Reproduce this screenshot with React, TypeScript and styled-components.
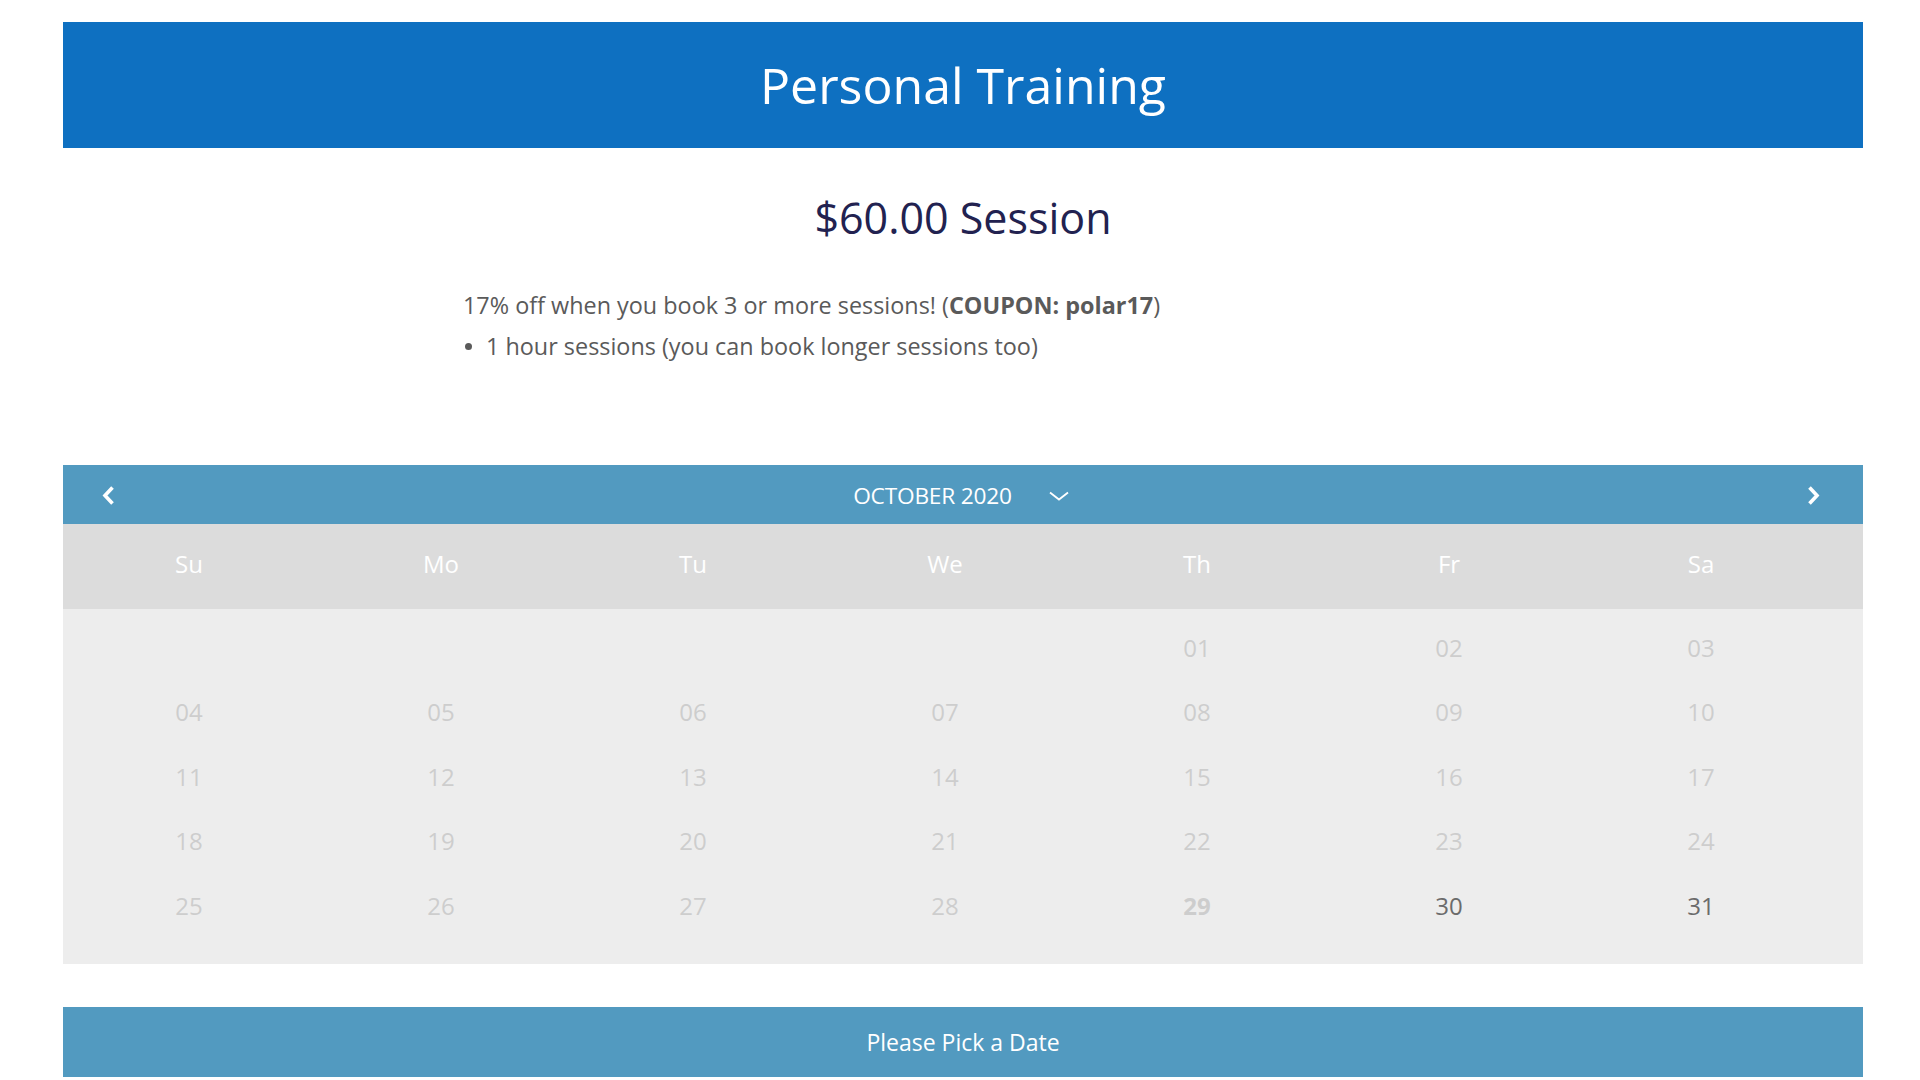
import React from "react";
import styled, { createGlobalStyle } from "styled-components";

const GlobalStyle = createGlobalStyle`
  html, body {
    margin: 0;
    padding: 0;
    background: #ffffff;
    font-family: "Open Sans", "Liberation Sans", sans-serif;
  }
`;

const Page = styled.div`
  width: 1800px;
  padding: 22px 0 0 63px;
`;

const Banner = styled.header`
  height: 126px;
  background-color: #0e70c1;
  display: flex;
  align-items: center;
  justify-content: center;
`;

const Title = styled.h1`
  margin: 0;
  color: #ffffff;
  font-size: 50px;
  font-weight: 400;
  line-height: 1.2;
`;

const Price = styled.h2`
  margin: 44px 0 0;
  text-align: center;
  color: #222250;
  font-size: 43px;
  font-weight: 400;
  line-height: 52px;
`;

const Description = styled.div`
  width: 1000px;
  margin: 41px auto 0;
  color: #5a5a5a;
  font-size: 23.4px;
  line-height: 41px;
`;

const Para = styled.p`
  margin: 0;
`;

const List = styled.ul`
  margin: 0;
  padding: 0;
  list-style: none;
`;

const Item = styled.li`
  display: flex;
  align-items: center;
  gap: 14px;
`;

const Dot = styled.span`
  width: 7px;
  height: 7px;
  margin-left: 2px;
  border-radius: 50%;
  background: #5a5a5a;
`;

const Calendar = styled.section`
  margin-top: 98px;
`;

const NavBar = styled.div`
  height: 59px;
  background-color: #529ac0;
  display: flex;
  align-items: center;
  justify-content: space-between;
  padding: 2px 43px 0 39px;
  box-sizing: border-box;
  color: #ffffff;
`;

const Arrow = styled.button`
  border: 0;
  background: none;
  padding: 0;
  width: 13px;
  height: 19px;
  display: flex;
  cursor: pointer;
`;

const MonthPicker = styled.div`
  display: flex;
  align-items: center;
  gap: 37px;
  font-size: 22.7px;
  letter-spacing: -0.2px;
`;

const Grid = styled.div<{ $pad?: string }>`
  display: grid;
  grid-template-columns: repeat(7, 252px);
  padding: ${(p) => p.$pad || "0"};
`;

const WeekRow = styled(Grid)`
  height: 85px;
  box-sizing: border-box;
  align-items: center;
  background-color: #dcdcdc;
`;

const DayName = styled.div`
  text-align: center;
  color: #ffffff;
  font-size: 24px;
`;

const DateArea = styled(Grid)`
  background-color: #ededed;
  grid-auto-rows: 64.5px;
  align-items: center;
`;

const DateCell = styled.div<{ $active?: boolean; $today?: boolean }>`
  text-align: center;
  font-size: 24px;
  color: ${(p) => (p.$active ? "#6b6b6b" : "#cdcdcd")};
  font-weight: ${(p) => (p.$today ? 700 : 400)};
`;

const PickButton = styled.button`
  display: block;
  width: 100%;
  height: 70px;
  margin-top: 43px;
  border: 0;
  background-color: #529ac0;
  color: #ffffff;
  font-family: inherit;
  font-size: 23px;
  cursor: pointer;
`;

const days = ["Su", "Mo", "Tu", "We", "Th", "Fr", "Sa"];
const offset = 4;
const cells: (number | null)[] = [
  ...Array(offset).fill(null),
  ...Array.from({ length: 31 }, (_, i) => i + 1),
];

function App() {
  return (
    <Page>
      <GlobalStyle />
      <Banner>
        <Title>Personal Training</Title>
      </Banner>
      <Price>$60.00 Session</Price>
      <Description>
        <Para>
          17% off when you book 3 or more sessions! (<b>COUPON: polar17</b>)
        </Para>
        <List>
          <Item>
            <Dot />
            1 hour sessions (you can book longer sessions too)
          </Item>
        </List>
      </Description>

      <Calendar>
        <NavBar>
          <Arrow aria-label="previous month">
            <svg width="13" height="19" viewBox="0 0 13 19">
              <polyline points="10.5,1.5 3,9.5 10.5,17.5" fill="none" stroke="#fff" strokeWidth="3.6" />
            </svg>
          </Arrow>
          <MonthPicker>
            OCTOBER 2020
            <svg width="20" height="10" viewBox="0 0 20 10">
              <polyline points="1,1.5 10,8.5 19,1.5" fill="none" stroke="#fff" strokeWidth="1.8" />
            </svg>
          </MonthPicker>
          <Arrow aria-label="next month">
            <svg width="13" height="19" viewBox="0 0 13 19">
              <polyline points="2.5,1.5 10,9.5 2.5,17.5" fill="none" stroke="#fff" strokeWidth="3.6" />
            </svg>
          </Arrow>
        </NavBar>
        <WeekRow $pad="0 0 7px">
          {days.map((d) => (
            <DayName key={d}>{d}</DayName>
          ))}
        </WeekRow>
        <DateArea $pad="6px 0 26.5px">
          {cells.map((n, i) => (
            <DateCell key={i} $today={n === 29} $active={n !== null && n >= 30}>
              {n === null ? "" : String(n).padStart(2, "0")}
            </DateCell>
          ))}
        </DateArea>
        <PickButton>Please Pick a Date</PickButton>
      </Calendar>
    </Page>
  );
}

export default App;
